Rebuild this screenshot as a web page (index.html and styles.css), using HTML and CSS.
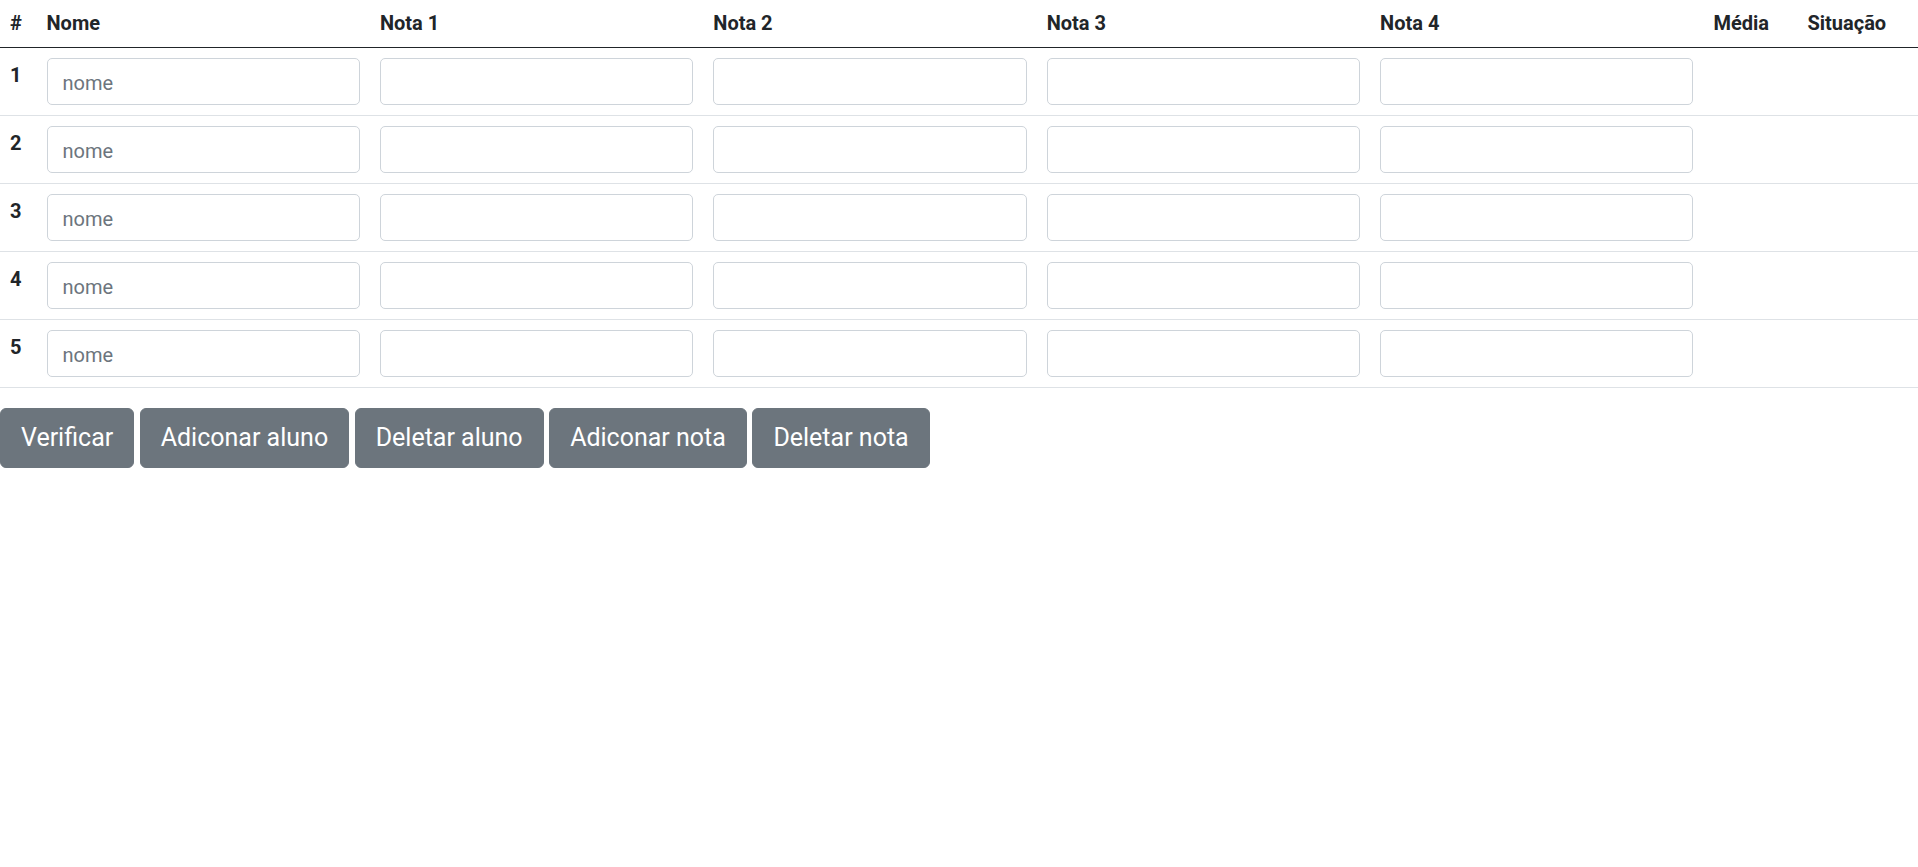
FILE: index.html
```html
<!DOCTYPE html>
<html lang="pt-BR">
<head>
<meta charset="utf-8">
<title>Notas</title>
<link rel="stylesheet" href="styles.css">
</head>
<body>
<table class="grades">
  <thead>
    <tr>
      <th class="col-idx">#</th>
      <th class="col-in">Nome</th>
      <th class="col-in">Nota 1</th>
      <th class="col-in">Nota 2</th>
      <th class="col-in">Nota 3</th>
      <th class="col-in">Nota 4</th>
      <th class="col-avg">Média</th>
      <th class="col-sit">Situação</th>
    </tr>
  </thead>
  <tbody>
    <tr>
      <th>1</th>
      <td><input class="field" type="text" placeholder="nome"></td>
      <td><input class="field" type="text"></td>
      <td><input class="field" type="text"></td>
      <td><input class="field" type="text"></td>
      <td><input class="field" type="text"></td>
      <td></td>
      <td></td>
    </tr>
    <tr>
      <th>2</th>
      <td><input class="field" type="text" placeholder="nome"></td>
      <td><input class="field" type="text"></td>
      <td><input class="field" type="text"></td>
      <td><input class="field" type="text"></td>
      <td><input class="field" type="text"></td>
      <td></td>
      <td></td>
    </tr>
    <tr>
      <th>3</th>
      <td><input class="field" type="text" placeholder="nome"></td>
      <td><input class="field" type="text"></td>
      <td><input class="field" type="text"></td>
      <td><input class="field" type="text"></td>
      <td><input class="field" type="text"></td>
      <td></td>
      <td></td>
    </tr>
    <tr>
      <th>4</th>
      <td><input class="field" type="text" placeholder="nome"></td>
      <td><input class="field" type="text"></td>
      <td><input class="field" type="text"></td>
      <td><input class="field" type="text"></td>
      <td><input class="field" type="text"></td>
      <td></td>
      <td></td>
    </tr>
    <tr>
      <th>5</th>
      <td><input class="field" type="text" placeholder="nome"></td>
      <td><input class="field" type="text"></td>
      <td><input class="field" type="text"></td>
      <td><input class="field" type="text"></td>
      <td><input class="field" type="text"></td>
      <td></td>
      <td></td>
    </tr>
  </tbody>
</table>
<div class="actions">
  <button class="btn" type="button">Verificar</button>
  <button class="btn" type="button">Adiconar aluno</button>
  <button class="btn" type="button">Deletar aluno</button>
  <button class="btn" type="button">Adiconar nota</button>
  <button class="btn" type="button">Deletar nota</button>
</div>
</body>
</html>
```

FILE: styles.css
```css
* {
  box-sizing: border-box;
}

body {
  margin: 0;
  font-family: Roboto, "Open Sans", sans-serif;
  font-size: 20px;
  line-height: 1.5;
  color: #212529;
  background: #fff;
}

.grades {
  width: 100%;
  table-layout: fixed;
  border-collapse: collapse;
  margin-bottom: 20px;
}

.grades th,
.grades td {
  text-align: left;
  vertical-align: top;
  font-weight: 700;
}

.grades thead th {
  padding: 8px 10px 9px;
  line-height: 30px;
  border-bottom: 1px solid #212529;
}

.grades tbody th,
.grades tbody td {
  padding: 10px 10px;
  border-bottom: 1px solid #dee2e6;
}

.grades tbody th {
  line-height: 30px;
  padding-top: 12px;
}

.col-idx { width: 36.5px; }
.col-in { width: 333.4px; }
.col-avg { width: 94px; }
.col-sit { width: auto; }

.field {
  display: block;
  width: 100%;
  height: 47px;
  padding: 3px 15px 0;
  font-family: inherit;
  font-size: 20px;
  line-height: 42px;
  color: #212529;
  background: #fff;
  border: 1px solid #ced4da;
  border-radius: 5px;
  outline: none;
}

.field::placeholder {
  color: #6c757d;
  opacity: 1;
}

.actions {
  display: flex;
  gap: 5.5px;
}

.btn {
  height: 60px;
  padding: 0 20px;
  font-family: inherit;
  font-size: 25px;
  line-height: 1.5;
  color: #fff;
  background: #6c757d;
  border: 1px solid #6c757d;
  border-radius: 6px;
}
```
